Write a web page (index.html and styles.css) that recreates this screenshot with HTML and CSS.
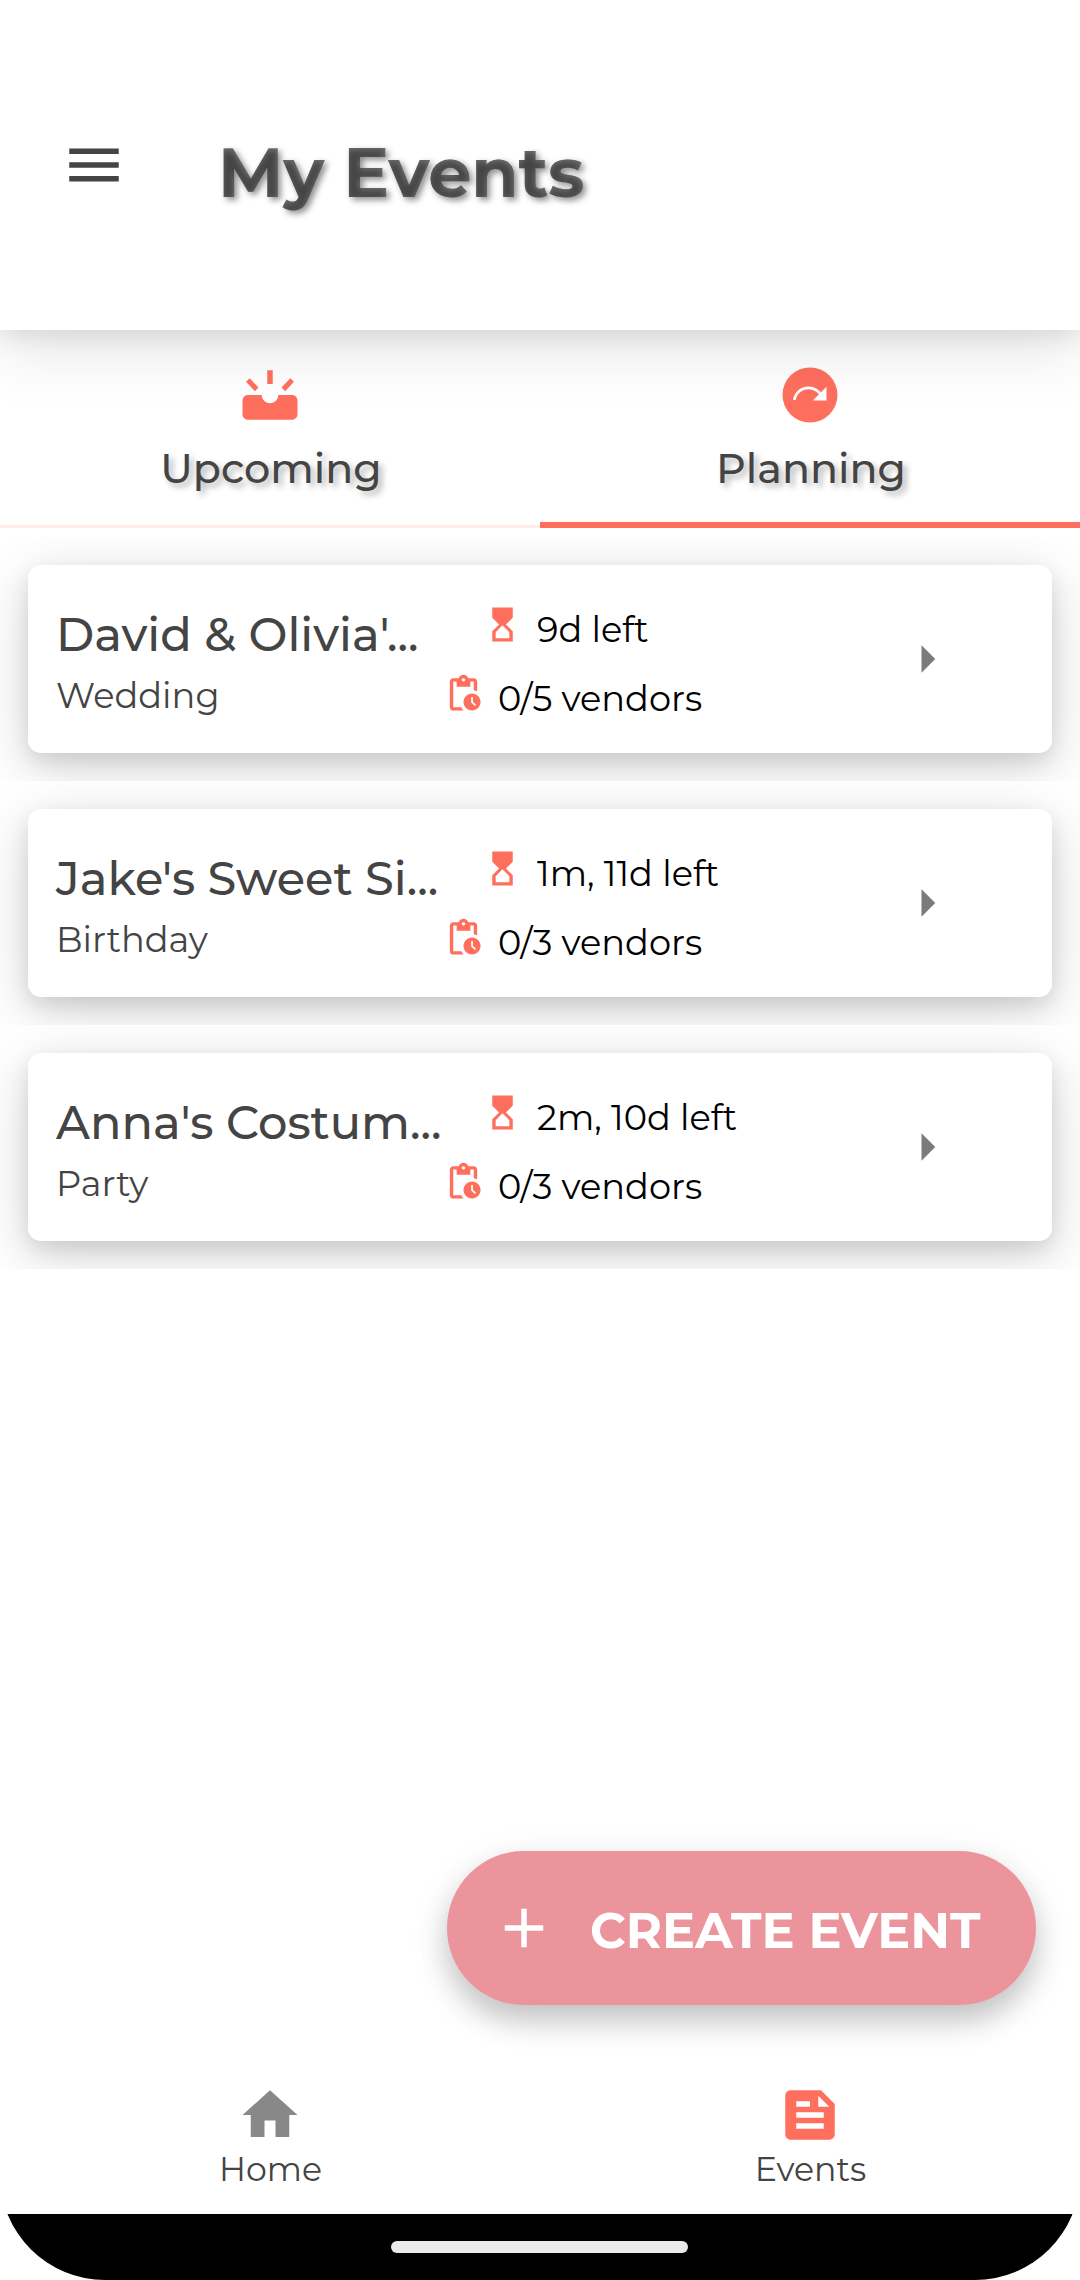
FILE: index.html
```html
<!DOCTYPE html>
<html lang="en">
<head>
<meta charset="utf-8">
<title>My Events</title>
<link rel="stylesheet" href="styles.css">
</head>
<body>
<svg class="defs" width="0" height="0" aria-hidden="true">
  <filter id="bevel" x="-5%" y="-20%" width="110%" height="140%" color-interpolation-filters="sRGB">
    <feGaussianBlur in="SourceAlpha" stdDeviation="3" result="soft"/>
    <feOffset in="soft" dx="-1" dy="2" result="moved"/>
    <feFlood flood-color="#808080" flood-opacity="0.75"/>
    <feComposite in2="moved" operator="out"/>
    <feComposite in2="SourceAlpha" operator="in" result="edge"/>
    <feMerge><feMergeNode in="SourceGraphic"/><feMergeNode in="edge"/></feMerge>
  </filter>
  <symbol id="hourglass" viewBox="0 0 24 24"><path d="M6 2v6h.01L6 8.010 10 12l-4 4 .01.01H6V22h12v-5.990h-.01L18 16l-4-4 4-3.990-.01-.01H18V2H6zm10 14.500V20H8v-3.500l4-4 4 4z"/></symbol>
  <symbol id="pending" viewBox="0 0 24 24"><path d="M17 12c-2.760 0-5 2.240-5 5s2.240 5 5 5 5-2.240 5-5-2.240-5-5-5zm1.650 7.350L16.500 17.200V14h1v2.790l1.850 1.850-.7.710zM18 3h-3.180C14.400 1.840 13.300 1 12 1s-2.400.84-2.820 2H6c-1.100 0-2 .9-2 2v15c0 1.100.9 2 2 2h6.110c-.59-.57-1.070-1.250-1.420-2H6V5h2v3h8V5h2v5.080c.71.1 1.380.31 2 .6V5c0-1.100-.9-2-2-2zm-6 2c-.55 0-1-.45-1-1s.45-1 1-1 1 .45 1 1-.45 1-1 1z"/></symbol>
  <symbol id="arrow" viewBox="0 0 24 24"><path d="M10 17l5-5-5-5z"/></symbol>
</svg>
<div class="screen">
  <header class="header">
    <svg class="icon menu" viewBox="0 0 24 24"><path d="M3 18h18v-2H3v2zm0-5h18v-2H3v2zm0-7v2h18V6H3z"/></svg>
    <h1 class="title"><span class="title-text">My Events</span></h1>
  </header>
  <nav class="tabs">
    <div class="tab">
      <svg class="icon" viewBox="0 0 24 24"><path d="M11 3h2v5h-2zM4.600 5.900 3.300 7.200l3.200 3.400 1.300-1.300zM19.400 5.900l-3.200 3.400 1.300 1.300 3.200-3.400zM4 12h5c0 1.660 1.340 3 3 3s3-1.340 3-3h5c1.100 0 2 .9 2 2v5c0 1.100-.9 2-2 2H4c-1.100 0-2-.9-2-2v-5c0-1.100.9-2 2-2z"/></svg>
      <span class="tab-label">Upcoming</span>
    </div>
    <div class="tab active">
      <svg class="icon" viewBox="0 0 24 24"><circle cx="12" cy="12" r="10"/><path class="stroke" d="M6.300 13.800C6.700 11.200 8.800 9.400 11.500 9.400c1.900 0 3.500 1 4.500 2.600"/><path class="cut" d="M18 9v5h-5z"/></svg>
      <span class="tab-label">Planning</span>
    </div>
  </nav>
  <main class="list">
    <div class="row"><article class="card">
      <div class="event"><h2>David &amp; Olivia'...</h2><p>Wedding</p></div>
      <div class="facts">
        <div class="fact time"><svg><use href="#hourglass"/></svg><span>9d left</span></div>
        <div class="fact"><svg><use href="#pending"/></svg><span>0/5 vendors</span></div>
      </div>
      <svg class="icon arrow"><use href="#arrow"/></svg>
    </article></div>
    <div class="row"><article class="card">
      <div class="event"><h2>Jake's Sweet Si...</h2><p>Birthday</p></div>
      <div class="facts">
        <div class="fact time"><svg><use href="#hourglass"/></svg><span>1m, 11d left</span></div>
        <div class="fact"><svg><use href="#pending"/></svg><span>0/3 vendors</span></div>
      </div>
      <svg class="icon arrow"><use href="#arrow"/></svg>
    </article></div>
    <div class="row"><article class="card">
      <div class="event"><h2>Anna's Costum...</h2><p>Party</p></div>
      <div class="facts">
        <div class="fact time"><svg><use href="#hourglass"/></svg><span>2m, 10d left</span></div>
        <div class="fact"><svg><use href="#pending"/></svg><span>0/3 vendors</span></div>
      </div>
      <svg class="icon arrow"><use href="#arrow"/></svg>
    </article></div>
  </main>
  <button class="fab">
    <svg class="icon" viewBox="0 0 24 24"><path d="M19 13h-6v6h-2v-6H5v-2h6V5h2v6h6v2z"/></svg>
    <span>CREATE EVENT</span>
  </button>
  <nav class="bottom">
    <div class="dest">
      <svg class="icon home" viewBox="0 0 24 24"><path d="M10 20v-6h4v6h5v-8h3L12 3 2 12h3v8z"/></svg>
      <span>Home</span>
    </div>
    <div class="dest">
      <svg class="icon" viewBox="0 0 24 24"><path fill-rule="evenodd" d="M16 3H5c-1.100 0-2 .9-2 2v14c0 1.100.9 2 2 2h14c1.100 0 2-.9 2-2V8l-5-5zM7 7h5v2H7V7zm10 10H7v-2h10v2zm0-4H7v-2h10v2zm-2-4V5l4 4h-4z"/></svg>
      <span>Events</span>
    </div>
  </nav>
  <div class="system"><div class="handle"></div></div>
</div>
</body>
</html>
```
FILE: styles.css
```css
* { box-sizing: border-box; }

body {
  margin: 0;
  background: #fff;
  color: #444;
  font-family: Montserrat, Inter, sans-serif;
}

h1, h2, p { margin: 0; }
.defs { position: absolute; }

.screen {
  position: relative;
  display: flex;
  flex-direction: column;
  width: 1080px;
  height: 2280px;
  overflow: hidden;
  border-radius: 0 0 105px 105px;
  background: #fff;
}

.icon {
  flex: none;
  width: 66px;
  height: 66px;
  fill: #ff6f5e;
}

/* Header */
.header {
  position: relative;
  z-index: 1;
  display: flex;
  flex: none;
  gap: 91px;
  height: 330px;
  padding: 131px 61px 0;
  background: #fff;
  box-shadow: 0 6px 22px rgba(0, 0, 0, .09), 0 22px 60px rgba(0, 0, 0, .1);
}
.menu { margin-top: 1px; fill: #444; }
.title {
  font-size: 68.5px;
  font-weight: 700;
  letter-spacing: -.2px;
  line-height: 84px;
  filter: drop-shadow(3px 3px 3px rgba(0, 0, 0, .45));
}
.title-text { display: block; filter: url(#bevel); }

/* Tabs */
.tabs { display: flex; flex: none; height: 198px; }
.tab {
  display: flex;
  flex: 1;
  flex-direction: column;
  align-items: center;
  gap: 15px;
  padding-top: 32px;
  border-bottom: 3px solid #ffebe8;
  font-size: 41.2px;
  font-weight: 500;
  line-height: 50px;
  text-shadow: 4px 4px 6px rgba(0, 0, 0, .3);
}
.tab-label { padding-left: 2px; }
.tab.active { border-bottom: 6px solid #ff6f5e; }
.cut { fill: #fff; }
.stroke { fill: none; stroke: #fff; stroke-width: 1; }

/* Event list */
.list { flex: 1; padding-top: 9px; }
.row { height: 244px; padding: 28px; overflow: hidden; background: #fff; }
.card {
  display: grid;
  grid-template-columns: 387px 451px 66px;
  height: 188px;
  padding-left: 28px;
  border-radius: 13px;
  background: #fff;
  box-shadow: 0 8px 20px rgba(0, 0, 0, .1), 0 14px 56px rgba(0, 0, 0, .17);
}
.event { padding-top: 42px; }
.event h2 { font-size: 46.3px; font-weight: 500; line-height: 56px; white-space: nowrap; }
.event p { margin-top: 11px; font-size: 35.2px; line-height: 43px; }
.facts { padding-top: 39px; }
.fact {
  display: flex;
  gap: 14px;
  height: 69px;
  color: #000;
  font-size: 35.2px;
  line-height: 43px;
}
.fact svg { width: 41px; height: 41px; fill: #ff6f5e; }
.fact span { padding-top: 4px; }
.time { padding-left: 39px; }
.arrow { align-self: center; fill: #7b7b7b; }

/* Floating action */
.fab {
  position: absolute;
  top: 1851px;
  right: 44px;
  display: flex;
  align-items: center;
  gap: 33px;
  width: 589px;
  height: 154px;
  padding: 0 0 0 44px;
  border: 0;
  border-radius: 77px;
  background: #eb949b;
  color: #fff;
  font: 700 49.3px/60px Montserrat, Inter, sans-serif;
  white-space: nowrap;
  box-shadow: 0 16px 28px rgba(0, 0, 0, .17), 0 12px 40px rgba(0, 0, 0, .1);
}
.fab .icon { fill: #fff; }
.fab span { padding-top: 4px; }

/* Bottom navigation */
.bottom { display: flex; flex: none; height: 132px; }
.dest {
  display: flex;
  flex: 1;
  flex-direction: column;
  align-items: center;
  gap: 1px;
  font-size: 33.2px;
  line-height: 40px;
}
.dest span { padding-left: 1px; }
.home { fill: #888; }
.system {
  display: flex;
  flex: none;
  justify-content: center;
  height: 66px;
  padding: 27px 1px 0 0;
  background: #000;
}
.handle { width: 297px; height: 12px; border-radius: 6px; background: #ebebeb; }
```
